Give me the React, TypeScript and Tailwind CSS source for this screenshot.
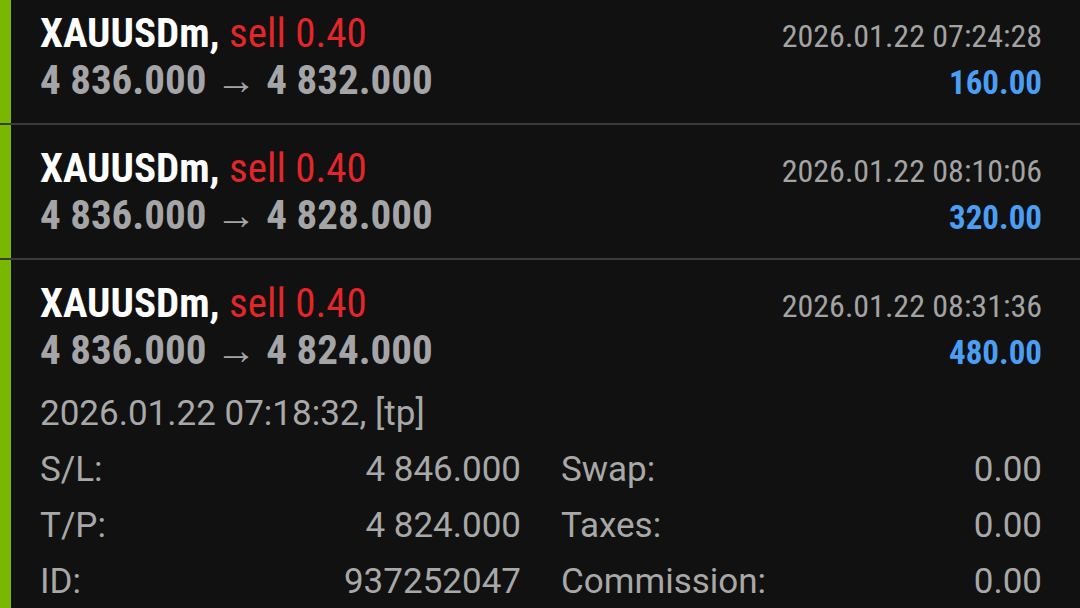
import React from "react";

interface Deal {
  symbol: string;
  side: string;
  open: string;
  close: string;
  time: string;
  profit: string;
}

const deals: Deal[] = [
  { symbol: "XAUUSDm,", side: "sell 0.40", open: "4 836.000", close: "4 832.000", time: "2026.01.22 07:24:28", profit: "160.00" },
  { symbol: "XAUUSDm,", side: "sell 0.40", open: "4 836.000", close: "4 828.000", time: "2026.01.22 08:10:06", profit: "320.00" },
  { symbol: "XAUUSDm,", side: "sell 0.40", open: "4 836.000", close: "4 824.000", time: "2026.01.22 08:31:36", profit: "480.00" },
];

const details = [
  ["S/L:", "4 846.000", "Swap:", "0.00"],
  ["T/P:", "4 824.000", "Taxes:", "0.00"],
  ["ID:", "937252047", "Commission:", "0.00"],
];

const cond = { fontFamily: '"Roboto Condensed", Roboto, sans-serif' };

const DealRow = ({ deal, expanded }: { deal: Deal; expanded?: boolean }) => (
  <div className="flex">
    <div className="w-[11px] shrink-0 bg-[#7ab800]" />
    <div className="flex-1 pl-[29px] pr-[38px] pt-[20px] pb-[19px]">
      <div className="flex justify-between items-baseline h-[47px] leading-[47px]" style={cond}>
        <div className="text-[41px] font-bold text-white">
          {deal.symbol} <span className="font-normal text-[#e3262a]">{deal.side}</span>
        </div>
        <div className="text-[32px] text-[#a3a3a3]">{deal.time}</div>
      </div>
      <div className="flex justify-between items-baseline h-[47px] leading-[47px]" style={cond}>
        <div className="text-[41px] font-bold text-[#a5a5a8]">
          {deal.open} <span className="font-normal">→</span> {deal.close}
        </div>
        <div className="text-[33px] font-bold text-[#4a9ff5]">{deal.profit}</div>
      </div>
      {expanded && (
        <div className="mt-[12px] text-[35px] text-[#a8a8a8]" style={{ fontFamily: "Roboto, sans-serif" }}>
          <div className="leading-[56px]">2026.01.22 07:18:32, [tp]</div>
          {details.map((d) => (
            <div key={d[0]} className="grid grid-cols-2 gap-[40px] leading-[56px]">
              <div className="flex justify-between">
                <span>{d[0]}</span>
                <span>{d[1]}</span>
              </div>
              <div className="flex justify-between">
                <span>{d[2]}</span>
                <span>{d[3]}</span>
              </div>
            </div>
          ))}
        </div>
      )}
    </div>
  </div>
);

export default function App() {
  return (
    <div className="w-[1080px] h-[608px] overflow-hidden bg-[#111111]">
      <div className="-mt-[10px] flex flex-col divide-y-2 divide-[#3a3a3a]">
        {deals.map((d, i) => (
          <DealRow key={i} deal={d} expanded={i === 2} />
        ))}
      </div>
    </div>
  );
}
